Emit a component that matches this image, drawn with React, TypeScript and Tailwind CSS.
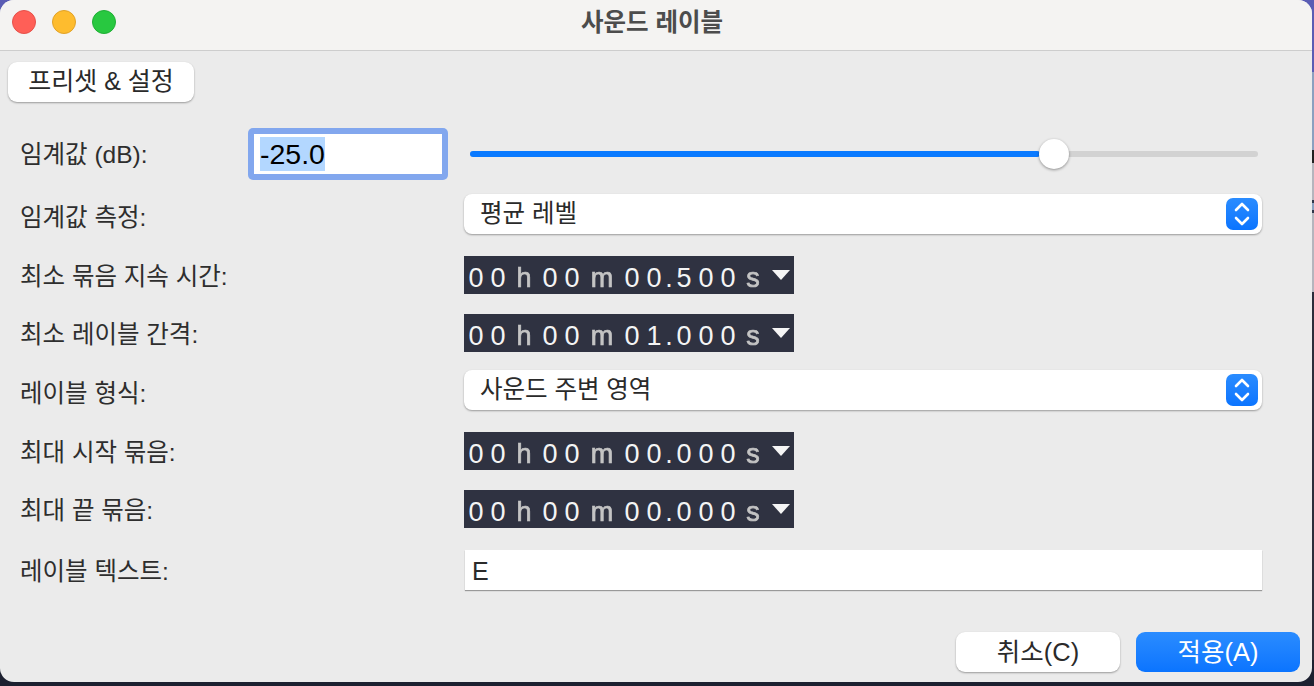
const font = "font-['Liberation_Sans','Noto_Sans_CJK_KR',sans-serif]";

type Cell = { ch: string; w: string; unit?: boolean };

function cellsFor(value: string): Cell[] {
  // value looks like 00.500
  const out: Cell[] = [
    { ch: '0', w: 'w-[22px]' },
    { ch: '0', w: 'w-[22px]' },
    { ch: 'h', w: 'w-[30px]', unit: true },
    { ch: '0', w: 'w-[22px]' },
    { ch: '0', w: 'w-[22px]' },
    { ch: 'm', w: 'w-[38px]', unit: true },
  ];
  for (const ch of value) {
    out.push({ ch, w: ch === '.' ? 'w-[8px]' : 'w-[22px]' });
  }
  out.push({ ch: 's', w: 'w-[28px]', unit: true });
  return out;
}

function TimeField({ value }: { value: string }) {
  return (
    <div className="flex h-[38px] w-[330px] items-center bg-[#2f3241] pl-[1px] font-['Liberation_Sans',sans-serif] text-[27px] leading-none">
      {cellsFor(value).map((c, i) => (
        <span key={i} className={`${c.w} pt-[6px] text-center ${c.unit ? 'text-[#c4c4c4] blur-[0.5px] [-webkit-text-stroke:0.7px_#c4c4c4]' : 'text-[#f4f4f4]'}`}>
          {c.ch}
        </span>
      ))}
      <svg width="18" height="10" viewBox="0 0 18 10" className="ml-[5px]">
        <path d="M0 0h18L9 10z" fill="#f5f5f5" />
      </svg>
    </div>
  );
}

function Stepper() {
  return (
    <div className="flex h-[32px] w-[32px] items-center justify-center rounded-[7px] bg-gradient-to-b from-[#2a8cff] to-[#0a74ff]">
      <svg width="18" height="26" viewBox="0 0 18 26" fill="none" stroke="white" strokeWidth="2.6" strokeLinecap="round" strokeLinejoin="round">
        <path d="M3 9l6-6 6 6" />
        <path d="M3 17l6 6 6-6" />
      </svg>
    </div>
  );
}

function SelectField({ value }: { value: string }) {
  return (
    <div className="flex h-[40px] w-[798px] items-center justify-between rounded-[8px] bg-white pl-[16px] pr-[4px] text-[24.5px] text-[#2a2a2a] shadow-[0_1px_2px_rgba(0,0,0,0.35)]">
      <span>{value}</span>
      <Stepper />
    </div>
  );
}

function Label({ children, low }: { children: string; low?: boolean }) {
  return (
    <span className={`w-[464px] shrink-0 pl-[20px] text-[24.5px] leading-none text-[#2e2e2e] ${low ? 'pt-[8px]' : 'pt-[5px]'}`}>
      {children}
    </span>
  );
}

export default function App() {
  return (
    <div className="h-[686px] w-[1314px] overflow-hidden bg-[linear-gradient(#5a5cb4_0,#5a5cb4_72px,#8ba0c0_72px,#8ba0c0_150px,#222_150px,#222_163px,#b5b5bd_163px,#b5b5bd_200px,#30364a_200px,#30364a_203px,#8ba0c0_203px,#8ba0c0_210px,#30364a_210px,#30364a_213px,#b5b5bd_213px,#b5b5bd_292px,#2b2d3b_292px,#2b2d3b_660px,#1c2030_660px)]">
      <div className={`flex h-[682px] w-[1312px] flex-col overflow-hidden rounded-[14px] bg-[#ebebeb] ${font}`}>
        <div className="relative flex h-[51px] shrink-0 items-center justify-center border-b border-[#cdcdcd] bg-[#f4f3f2] pb-[4px] pr-[8px]">
          <div className="absolute left-[12px] top-[10px] flex gap-[16px]">
            <span className="h-[24px] w-[24px] rounded-full border border-[#e5504a] bg-[#ff5f57]" />
            <span className="h-[24px] w-[24px] rounded-full border border-[#e0a128] bg-[#febc2e]" />
            <span className="h-[24px] w-[24px] rounded-full border border-[#1fae35] bg-[#28c840]" />
          </div>
          <span className="text-[24.5px] font-bold leading-none text-[#4c4c4c]">사운드 레이블</span>
        </div>

        <div className="px-[8px] pt-[11px]">
          <button className="flex h-[40px] w-[186px] items-center justify-center rounded-[9px] bg-white text-[25px] text-[#2a2a2a] shadow-[0_1px_2px_rgba(0,0,0,0.35)]">
            프리셋 &amp; 설정
          </button>
        </div>

        <div className="mt-[26px] flex h-[52px] items-center">
          <span className="w-[248px] shrink-0 pl-[20px] pt-[2px] text-[24.5px] leading-none text-[#2e2e2e]">임계값 (dB):</span>
          <div className="flex h-[52px] w-[200px] items-center rounded-[5px] bg-[#82a7ee] p-[6px]">
            <div className="flex h-full w-full items-center bg-white pl-[6px]">
              <span className="bg-[#b3d7ff] text-[28.5px] leading-[34px] text-black">-25.0</span>
            </div>
          </div>
          <div className="relative ml-[22px] h-[6px] w-[788px] rounded-full bg-[#d2d2d2]">
            <div className="h-full w-[570px] rounded-full bg-[#0a7aff]" />
            <div className="absolute left-[569px] top-[-12px] h-[30px] w-[30px] rounded-full bg-white shadow-[0_1px_3px_rgba(0,0,0,0.4)]" />
          </div>
        </div>

        <div className="mt-[14px] flex items-center">
          <Label low>임계값 측정:</Label>
          <SelectField value="평균 레벨" />
        </div>
        <div className="mt-[22px] flex items-center">
          <Label>최소 묶음 지속 시간:</Label>
          <TimeField value="00.500" />
        </div>
        <div className="mt-[20px] flex items-center">
          <Label>최소 레이블 간격:</Label>
          <TimeField value="01.000" />
        </div>
        <div className="mt-[18px] flex items-center">
          <Label low>레이블 형식:</Label>
          <SelectField value="사운드 주변 영역" />
        </div>
        <div className="mt-[22px] flex items-center">
          <Label>최대 시작 묶음:</Label>
          <TimeField value="00.000" />
        </div>
        <div className="mt-[20px] flex items-center">
          <Label>최대 끝 묶음:</Label>
          <TimeField value="00.000" />
        </div>
        <div className="mt-[22px] flex items-center">
          <Label>레이블 텍스트:</Label>
          <div className="ml-[1px] flex h-[40px] w-[797px] items-center bg-white pl-[7px] pt-[3px] text-[25px] text-[#2a2a2a] shadow-[0_1px_1px_rgba(0,0,0,0.35)]">
            E
          </div>
        </div>

        <div className="mt-[42px] flex justify-end gap-[16px] pr-[12px]">
          <button className="h-[40px] w-[164px] rounded-[9px] bg-white text-[25.5px] text-[#2a2a2a] shadow-[0_1px_2px_rgba(0,0,0,0.35)]">
            취소(C)
          </button>
          <button className="h-[40px] w-[164px] rounded-[9px] bg-gradient-to-b from-[#2a8cff] to-[#0a74ff] text-[25.5px] text-white">
            적용(A)
          </button>
        </div>
      </div>
    </div>
  );
}
